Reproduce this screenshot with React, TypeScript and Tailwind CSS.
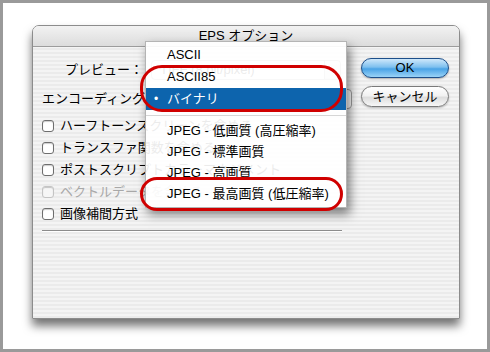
import React from "react";

const font = "font-['Liberation_Sans','Noto_Sans_CJK_JP',sans-serif]";

function Checkbox({ label, disabled }: { label: string; disabled?: boolean }) {
  return (
    <div className="flex items-center h-[22px] gap-[6px]">
      <div
        className={`w-[12px] h-[12px] rounded-[3px] border ${
          disabled ? "border-[#c4c4c4] bg-[#f6f6f6]" : "border-[#6e6e6e] bg-white"
        } shadow-[inset_0_1px_1px_rgba(0,0,0,0.2)]`}
      />
      <span className={disabled ? "text-[#a8a8a8]" : "text-black"}>{label}</span>
    </div>
  );
}

function MenuItem({ label, selected }: { label: string; selected?: boolean }) {
  return (
    <div
      className={`flex items-center h-[22px] pl-[8px] ${
        selected ? "bg-[#0d64ad] text-white" : "text-black"
      }`}
    >
      <span className="w-[13px] text-[12px]">{selected ? "•" : ""}</span>
      <span>{label}</span>
    </div>
  );
}

export default function App() {
  return (
    <div
      className={`relative w-[490px] h-[352px] border-[3px] border-[#9a9a9a] bg-white pl-[29px] pt-[22px] text-[13px] ${font}`}
    >
      {/* dialog */}
      <div className="w-[428px] h-[294px] rounded-t-[7px] border border-[#8c8c8c] overflow-hidden shadow-[0_7px_10px_rgba(0,0,0,0.55)] flex flex-col">
        <div className="h-[21px] shrink-0 flex items-center justify-center bg-[linear-gradient(#f2f2f2,#dcdcdc)] border-b border-[#9c9c9c] text-black">
          EPS オプション
        </div>
        <div className="flex-1 flex bg-[repeating-linear-gradient(0deg,#ebebeb_0px,#ebebeb_2px,#f4f4f4_2px,#f4f4f4_4px)]">
          <div className="flex-1 pl-[9px] pt-[11px]">
            <div className="flex items-center h-[24px]">
              <span className="w-[103px] text-right pr-[2px]">プレビュー：</span>
              <div className="ml-[6px] w-[190px] h-[20px] rounded-[4px] border border-[#a0a0a0] bg-white flex items-center justify-between pl-[8px]">
                <span>TIFF (8 bit/pixel)</span>
                <span className="w-[16px] h-full border-l border-[#a0a0a0] bg-[linear-gradient(#fafafa,#dadada)] rounded-r-[4px]" />
              </div>
            </div>
            <div className="flex items-center h-[24px] mt-[5px]">
              <span>エンコーディング：</span>
              <div className="ml-[4px] w-[190px] h-[20px] rounded-[4px] border border-[#a0a0a0] bg-white" />
            </div>
            <div className="mt-[4px] flex flex-col">
              <Checkbox label="ハーフトーンスクリーンを含める" />
              <Checkbox label="トランスファ関数を含める" />
              <Checkbox label="ポストスクリプトカラーマネジメント" />
              <Checkbox label="ベクトルデータを含める" disabled />
              <Checkbox label="画像補間方式" />
            </div>
            <div className="mt-[5px] w-[300px] h-px bg-[#8c8c8c] border-b border-white box-content" />
          </div>
          <div className="w-[88px] mr-[10px] pt-[11px] flex flex-col gap-[8px]">
            <div className="h-[20px] rounded-full border border-[#1d4f8a] bg-[linear-gradient(#cfe8fb_0%,#7ec0ef_45%,#4aa3e6_55%,#9ad3f7_100%)] flex items-center justify-center text-black shadow-[0_1px_2px_rgba(0,0,0,0.3)]">
              OK
            </div>
            <div className="h-[21px] rounded-full border border-[#7a7a7a] bg-[linear-gradient(#ffffff_0%,#f2f2f2_45%,#dedede_55%,#f7f7f7_100%)] flex items-center justify-center text-black shadow-[0_1px_2px_rgba(0,0,0,0.25)]">
              キャンセル
            </div>
          </div>
        </div>
      </div>

      {/* popup menu */}
      <div className="absolute left-[142px] top-[38px] w-[202px] h-[167px] pt-[2px] bg-white/[0.92] border border-[#b4b4b4] shadow-[3px_6px_10px_rgba(0,0,0,0.5)]">
        <MenuItem label="ASCII" />
        <MenuItem label="ASCII85" />
        <MenuItem label="バイナリ" selected />
        <div className="h-[10px] flex items-center">
          <div className="w-full h-px bg-[#d6d6d6]" />
        </div>
        <div className="[&>div]:h-[21px]">
          <MenuItem label="JPEG - 低画質 (高圧縮率)" />
          <MenuItem label="JPEG - 標準画質" />
          <MenuItem label="JPEG - 高画質" />
          <MenuItem label="JPEG - 最高画質 (低圧縮率)" />
        </div>
      </div>

      {/* red annotations */}
      <div className="absolute left-[137px] top-[62px] w-[203px] h-[47px] rounded-[22px] border-[3px] border-[#d00000]" />
      <div className="absolute left-[137px] top-[174px] w-[203px] h-[34px] rounded-[18px] border-[3px] border-[#d00000]" />
    </div>
  );
}
